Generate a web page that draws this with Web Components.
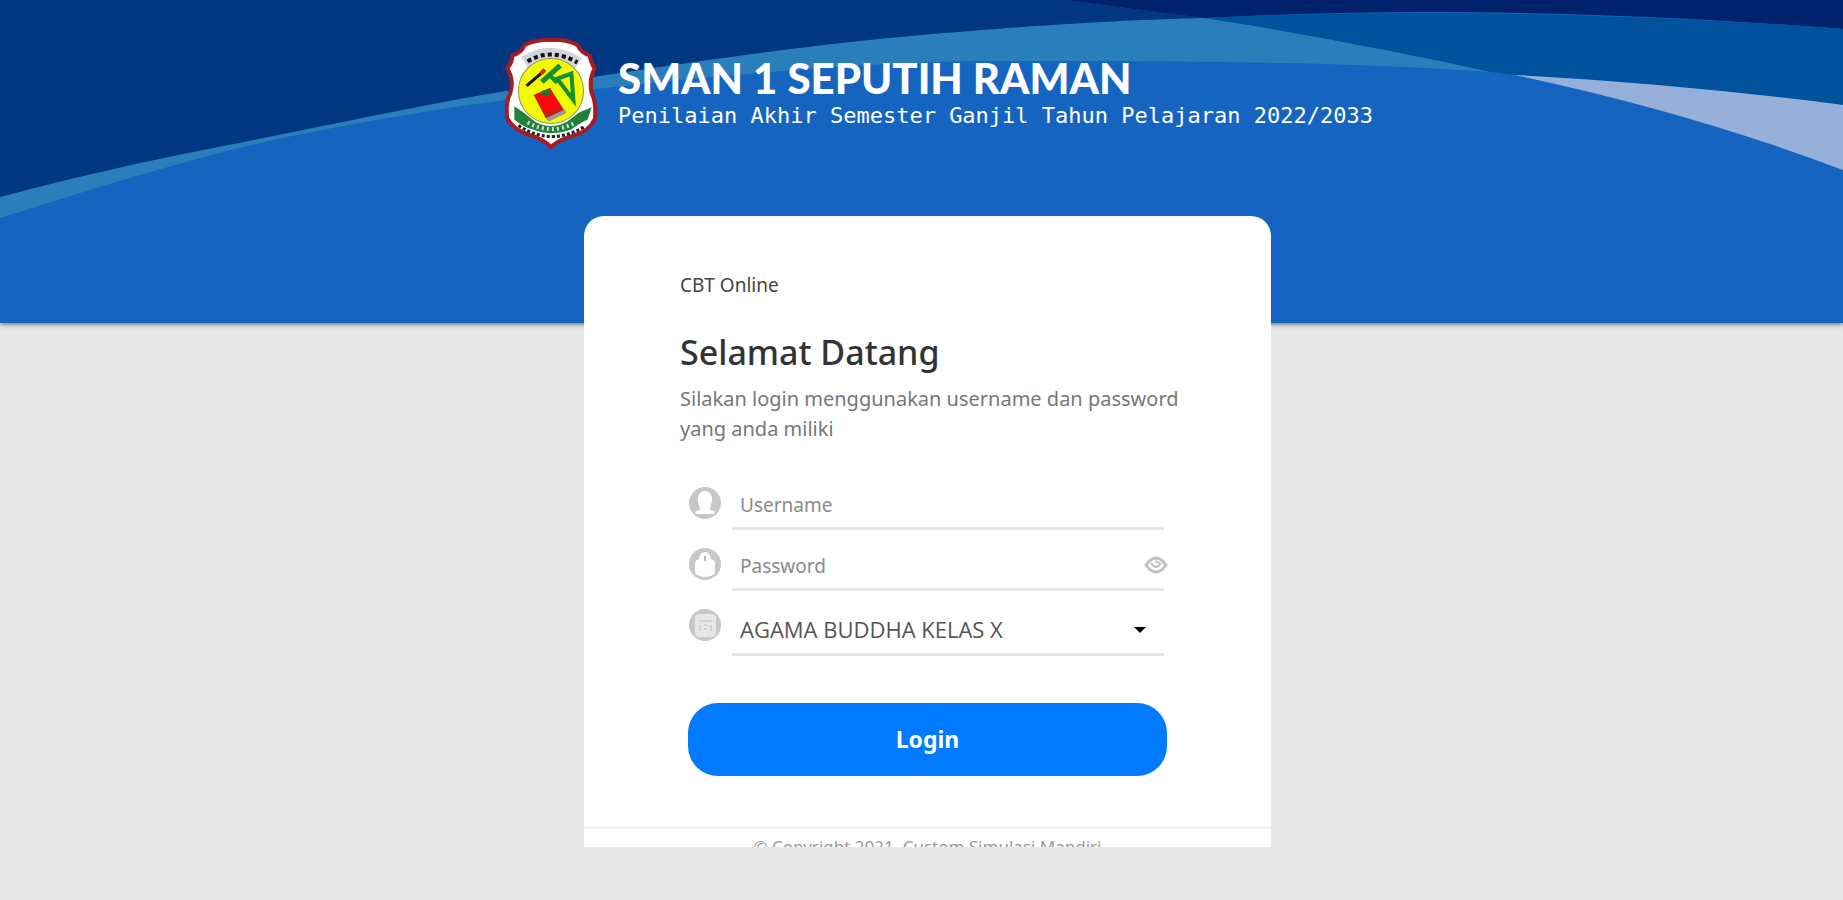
<!DOCTYPE html>
<html lang="id">
<head>
<meta charset="utf-8">
<meta name="viewport" content="width=device-width, initial-scale=1">
<title>CBT Online</title>
<style>
  body {
    margin: 0;
    min-height: 100vh;
    background: #e8e8e8;
    font-family: "Noto Sans", "Open Sans", sans-serif;
  }
</style>
</head>
<body>
<login-page>
  <school-header slot="header">
    <span slot="name">SMAN 1 SEPUTIH RAMAN</span>
    <span slot="exam">Penilaian Akhir Semester Ganjil Tahun Pelajaran 2022/2033</span>
  </school-header>
  <login-card></login-card>
</login-page>

<script>
class LoginPage extends HTMLElement {
  constructor() {
    super();
    this.attachShadow({ mode: "open" });
    this.shadowRoot.innerHTML = `
      <style>
        :host { display: block; }
        main {
          display: flex;
          justify-content: center;
          margin-top: -107px;
          padding: 0 16px 48px 28px;
        }
      </style>
      <slot name="header"></slot>
      <main><slot></slot></main>
    `;
  }
}

class SchoolHeader extends HTMLElement {
  constructor() {
    super();
    this.attachShadow({ mode: "open" });
    this.shadowRoot.innerHTML = `
      <style>
        :host {
          display: grid;
          background: #1565c0;
          box-shadow: 0 1px 5px rgba(0, 0, 0, 0.6);
          color: #fff;
        }
        .waves, header { grid-area: 1 / 1; }
        .waves { width: 100%; height: 323px; display: block; }
        header {
          display: flex;
          align-items: flex-start;
          justify-content: center;
          gap: 18px;
          padding: 36px 16px 0 48px;
          z-index: 1;
        }
        h1 {
          margin: 0;
          padding-top: 20px;
          font: 900 42px/44px Lato, sans-serif;
        }
        p {
          margin: 0;
          font: 22px/32px "DejaVu Sans Mono", monospace;
        }
      </style>
      <svg class="waves" viewBox="0 0 1843 323" preserveAspectRatio="none" aria-hidden="true">
        <path fill="#2a7fba" d="M0 197C70 178 150 160 223 146S420 105 505 91 780 47 921 35 1130 20 1203 18C1250 24 1409 53 1491 72 1330 61 1160 61 1000 61 840 60 590 89 505 100S300 132 223 152 70 196 0 218Z"/>
        <path fill="#003780" d="M0 0H1065L1203 18C1130 20 1062 23 921 35S590 77 505 91 296 132 223 146 70 178 0 197Z"/>
        <path fill="#00216b" d="M1065 0H1843V29Q1500 2 1203 18Z"/>
        <path fill="#00529c" d="M1203 18C1300 13 1420 12 1520 14S1760 22 1843 29V105Q1680 84 1515 75L1491 72C1409 53 1250 24 1203 18Z"/>
        <path fill="#96b0da" d="M1515 75Q1680 84 1843 105V170Q1690 112 1515 75Z"/>
      </svg>
      <header>
        <school-crest></school-crest>
        <div>
          <h1><slot name="name"></slot></h1>
          <p><slot name="exam"></slot></p>
        </div>
      </header>
    `;
  }
}

class SchoolCrest extends HTMLElement {
  constructor() {
    super();
    this.attachShadow({ mode: "open" });
    this.shadowRoot.innerHTML = `
      <style>
        :host { display: block; flex: none; }
        svg { display: block; }
      </style>
      <svg width="98" height="116" viewBox="0 0 96 114" role="img" aria-label="Logo sekolah">
        <path fill="#fff" stroke="#a51c24" stroke-width="4" d="M22 9Q30 5 40 4H57Q67 5 74 9Q78 17 86 19Q87 26 91 32Q85 43 88 56Q93 67 91 82Q85 94 70 98Q57 101 48 109Q40 101 26 97Q11 92 5 81Q3 66 8 56Q12 43 5 32Q10 26 10 19Q19 17 22 9Z"/>
        <path fill="none" stroke="#d4d4db" stroke-width="12" d="M22 26Q48 9 75 27"/>
        <path fill="none" stroke="#111" stroke-width="4" stroke-dasharray="4 3" d="M25 25Q48 11 74 26"/>
        <circle cx="48" cy="54" r="32" fill="#f2fb05" stroke="#8f9a52"/>
        <path stroke="#111" stroke-width="3" d="M24 49L38 37"/>
        <path stroke="#e02020" stroke-width="4" d="M38 37L42 33"/>
        <path stroke="#169030" stroke-width="5" d="M39 45L57 29"/>
        <path stroke="#169030" stroke-width="4" d="M46 38L54 46"/>
        <path fill="none" stroke="#169030" stroke-width="4" d="M54 42L68 37L70 63Z"/>
        <path fill="#c2201c" d="M31 58L47 51L61 73L43 81Z"/>
        <path fill="#fb0808" d="M32 58L47 51L57 70L42 76Z"/>
        <path fill="#999" d="M43 81L62 72L63 76L46 84Z"/>
        <ellipse cx="43" cy="56" rx="5" ry="3" fill="#22702a"/>
        <path fill="#23803a" d="M12 69L22 76 32 84Q48 93 64 84L76 75 88 70 84 82Q72 88 68 92 48 99 30 92 18 88 12 82Z"/>
        <path fill="none" stroke="#c6ded0" stroke-width="4" stroke-dasharray="2 3" d="M25 85Q48 98 72 85"/>
        <path fill="none" stroke="#222" stroke-width="3" stroke-dasharray="3 2" d="M16 88Q48 109 81 89"/>
      </svg>
    `;
  }
}

class FormField extends HTMLElement {
  static icons = {
    user: `<circle cx="17" cy="17" r="16" fill="#c6c7c8"/>
      <path fill="#fff" d="M17 5c-5 0-7 4-7 8 0 5 2 7 2 11l-4 1c-1 1-1 2 0 3h18c1-1 1-2 0-3l-4-1c0-4 2-6 2-11 0-4-2-8-7-8z"/>`,
    lock: `<circle cx="17" cy="17" r="16" fill="#c6c7c8"/>
      <path fill="#fff" d="M11 12q1-7 6-7t6 7q4 1 4 4v9q0 2-2 3-8 4-16 0-2-1-2-3v-9q0-3 4-4z"/>
      <path stroke="#bbb" stroke-width="2" d="M17 9v5"/>`,
    list: `<circle cx="17" cy="17" r="16" fill="#c6c7c8"/>
      <rect x="7" y="6" width="21" height="23" rx="4" fill="#e6e8e8"/>
      <path stroke="#d0d2d3" stroke-width="2" d="M11 13h13M12 17v6M16 17h3M16 21h3M23 17v6"/>`
  };

  constructor() {
    super();
    this.attachShadow({ mode: "open" });
  }

  connectedCallback() {
    this.render();
  }

  control() {
    const label = this.getAttribute("label");
    if (this.getAttribute("type") === "select") {
      return `<select id="control"><option>${this.getAttribute("value")}</option></select>
        <svg class="caret" width="12" height="7" viewBox="0 0 12 7" aria-hidden="true"><path d="M0 1h12L6 7z"/></svg>`;
    }
    return `<input id="control" type="${this.getAttribute("type")}" placeholder="${label}">`;
  }

  render() {
    const eye = `
      <button type="button" aria-label="Tampilkan password">
        <svg width="24" height="18" viewBox="0 0 24 18" fill="none" stroke="#c0c1c2" stroke-width="3">
          <path d="M2 9Q7 2 12 2T22 9Q17 16 12 16T2 9Z"/><path stroke-width="2" d="M7 7q5 8 10 0M11 6q4-1 5 3"/>
        </svg>
      </button>`;

    this.shadowRoot.innerHTML = `
      <style>
        :host {
          display: grid;
          grid-template-columns: 34px minmax(0, 1fr);
          column-gap: 10px;
          height: var(--field-height, 61px);
          padding-right: 3px;
        }
        .icon { padding-top: 17px; }
        .icon svg { display: block; }
        .box {
          display: flex;
          align-items: center;
          box-sizing: border-box;
          height: 100%;
          border-bottom: 3px solid #e6e6e6;
          padding: 0 0 0 8px;
        }
        input, select {
          flex: 1;
          min-width: 0;
          border: 0;
          outline: 0;
          padding: 14px 0 0;
          background: none;
          color: #555;
          appearance: none;
          font: 19px/30px "Noto Sans", sans-serif;
        }
        select { font: 22px/32px "Open Sans", sans-serif; }
        input::placeholder { color: #8a8a8a; opacity: 1; }
        .caret { margin: 14px 18px 0 0; }
        button {
          display: flex;
          border: 0;
          padding: 12px 0 0;
          margin-right: -4px;
          background: none;
        }
      </style>
      <label class="icon" for="control" aria-label="${this.getAttribute("label")}">
        <svg width="34" height="34" viewBox="0 0 34 34" aria-hidden="true">${FormField.icons[this.getAttribute("icon")]}</svg>
      </label>
      <div class="box">${this.control()}${this.getAttribute("type") === "password" ? eye : ""}</div>
    `;
  }
}

class LoginCard extends HTMLElement {
  constructor() {
    super();
    this.attachShadow({ mode: "open" });
    this.shadowRoot.innerHTML = `
      <style>
        :host {
          display: block;
          position: relative;
          z-index: 1;
          width: 687px;
          max-width: 100%;
          background: #fff;
          border-radius: 20px 20px 0 0;
        }
        section { padding: 54px 80px 50px 96px; }
        .brand { margin: 0 0 30px; font-size: 19px; line-height: 30px; color: #444; }
        h2 { margin: 0; font-size: 34px; line-height: 44px; font-weight: 500; color: #333; }
        .intro { margin: 10px 0 25px; font-size: 20px; line-height: 30px; color: #777; }
        form { padding: 0 24px 0 8px; }
        form-field:last-of-type { --field-height: 65px; }
        .login {
          display: block;
          width: 100%;
          margin-top: 47px;
          border: 0;
          border-radius: 30px;
          padding: 20px 0;
          background: #007bff;
          color: #fff;
          font: 700 23px/33px "Noto Sans", sans-serif;
        }
        footer {
          height: 18px;
          overflow: hidden;
          border-top: 3px solid #f2f2f2;
          color: #999;
          font-size: 17px;
          line-height: 36px;
          text-align: center;
        }
      </style>
      <section>
        <p class="brand">CBT Online</p>
        <h2>Selamat Datang</h2>
        <p class="intro">Silakan login menggunakan username dan password yang anda miliki</p>
        <form>
          <form-field icon="user" type="text" label="Username"></form-field>
          <form-field icon="lock" type="password" label="Password"></form-field>
          <form-field icon="list" type="select" label="Mata pelajaran" value="AGAMA BUDDHA KELAS X"></form-field>
          <button class="login" type="button">Login</button>
        </form>
      </section>
      <footer>© Copyright 2021, Custom Simulasi Mandiri</footer>
    `;
  }
}

customElements.define("school-crest", SchoolCrest);
customElements.define("form-field", FormField);
customElements.define("school-header", SchoolHeader);
customElements.define("login-card", LoginCard);
customElements.define("login-page", LoginPage);
</script>
</body>
</html>
